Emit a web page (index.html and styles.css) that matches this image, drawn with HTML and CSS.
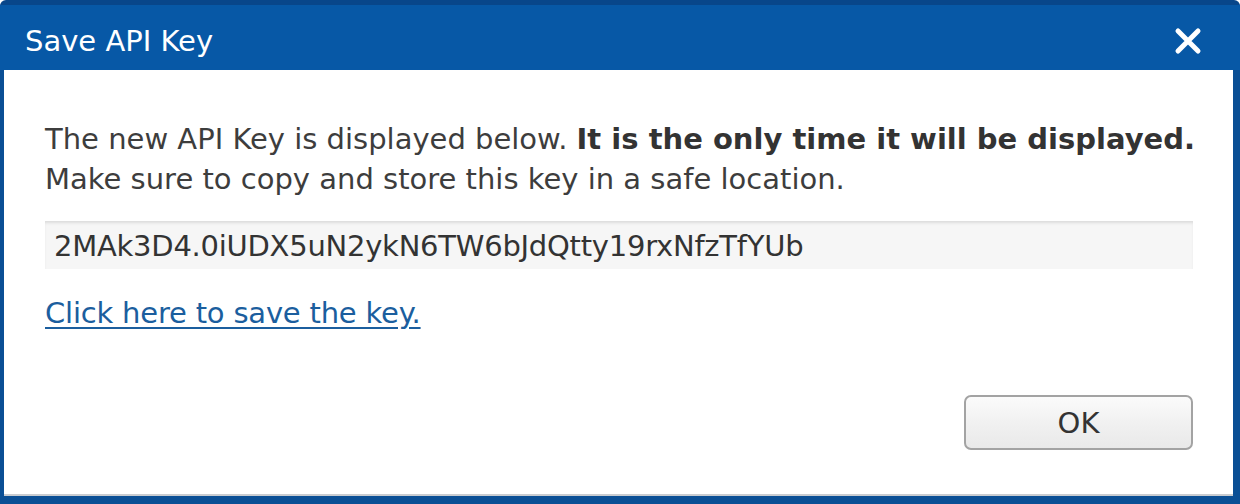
FILE: index.html
```html
<!DOCTYPE html>
<html>
<head>
<meta charset="utf-8">
<link rel="stylesheet" href="styles.css">
</head>
<body>
<div class="dialog">
  <div class="titlebar">
    <span class="title">Save API Key</span>
    <svg class="close" width="28" height="28" viewBox="0 0 28 28"><path d="M4 4 L24 24 M24 4 L4 24" stroke="#fff" stroke-width="5" stroke-linecap="round"/></svg>
  </div>
  <div class="content">
    <p class="message">The new API Key is displayed below. <b>It is the only time it will be displayed.</b><br>Make sure to copy and store this key in a safe location.</p>
    <div class="keyfield">2MAk3D4.0iUDX5uN2ykN6TW6bJdQtty19rxNfzTfYUb</div>
    <a class="savelink" href="#">Click here to save the key.</a>
    <div class="actions">
      <button class="okbtn">OK</button>
    </div>
  </div>
</div>
</body>
</html>
```
FILE: styles.css
```css
html, body {
  margin: 0;
  padding: 0;
  background: #fff;
}
.dialog {
  width: 1240px;
  height: 504px;
  box-sizing: border-box;
  background: #0a4f95;
  border-top: 5px solid #08468a;
  border-radius: 6px 6px 0 0;
  display: flex;
  flex-direction: column;
  font-family: "DejaVu Sans", sans-serif;
}
.titlebar {
  height: 65px;
  background: #0758a6;
  display: flex;
  align-items: center;
  justify-content: space-between;
  padding: 0 38px 0 25px;
}
.title {
  color: #fff;
  font-size: 29px;
  padding-top: 6px;
}
.close {
  margin-top: 6px;
}
.content {
  flex: 1;
  background: #fff;
  margin: 0 7px 8px 4px;
  border-bottom: 2px solid #c9ccd0;
  padding: 49px 40px 0 41px;
  display: flex;
  flex-direction: column;
  color: #3d3d3d;
  font-size: 29px;
}
.message {
  margin: 0;
  line-height: 40px;
  white-space: nowrap;
}
.message b {
  color: #333;
}
.keyfield {
  margin-top: 22px;
  height: 48px;
  line-height: 50px;
  background: #f6f6f6;
  box-shadow: inset 0 3px 3px -1px #dcdcdc;
  padding-left: 9px;
  color: #333;
  letter-spacing: -0.25px;
}
.savelink {
  margin-top: 24px;
  align-self: flex-start;
  color: #1b5e9e;
  text-decoration: underline;
  text-underline-offset: 4px;
  line-height: 40px;
  letter-spacing: -0.2px;
}
.actions {
  display: flex;
  justify-content: flex-end;
  margin-top: 62px;
}
.okbtn {
  width: 229px;
  height: 55px;
  border: 2px solid #a3a3a3;
  border-radius: 7px;
  background: linear-gradient(#fbfbfb, #f1f1f1 50%, #e9e9e9);
  font-family: "DejaVu Sans", sans-serif;
  font-size: 29px;
  color: #333;
  padding: 0;
}
```
